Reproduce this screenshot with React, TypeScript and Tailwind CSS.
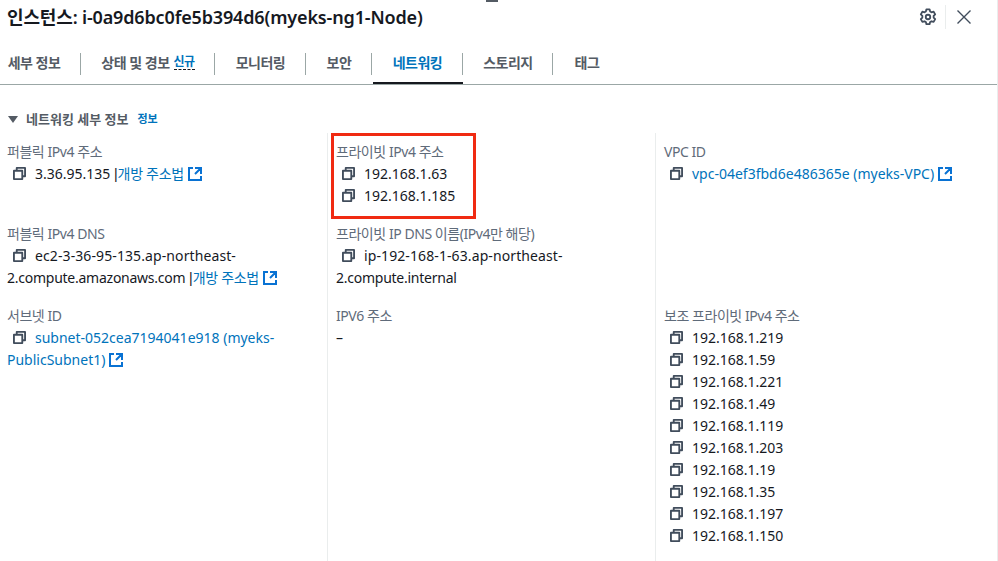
import type { ReactNode } from 'react';

const tabs = ['세부 정보', '상태 및 경보', '모니터링', '보안', '네트워킹', '스토리지', '태그'];
const tabWidths = ['w-[81px]', 'w-[134px]', 'w-[91px]', 'w-[66px]', 'w-[91px]', 'w-[90px]', 'w-[68px]'];
const secondaryIps = [
  '192.168.1.219',
  '192.168.1.59',
  '192.168.1.221',
  '192.168.1.49',
  '192.168.1.119',
  '192.168.1.203',
  '192.168.1.19',
  '192.168.1.35',
  '192.168.1.197',
  '192.168.1.150',
];

const CopyIcon = () => (
  <svg viewBox="1 1 14 14" fill="none" stroke="#414d5c" strokeWidth="2" className="inline-block w-[13px] h-[13px] ml-[6px] mr-[9px] align-[-1px]">
    <path d="M2 5h9v9H2z" strokeLinejoin="round" />
    <path d="M5 5V2h9v9h-3" strokeLinejoin="round" />
  </svg>
);

const ExternalIcon = () => (
  <svg viewBox="1 1 14 14" fill="none" stroke="#0972d3" strokeWidth="2" className="inline-block w-[14px] h-[14px] ml-[4px] align-[-2px]">
    <path d="M14 8V2H8M14 2 8 8M6 2H2v12h12v-4" />
  </svg>
);

// 개방 주소법 link, the bar before it is narrow in the original
const OpenAddress = () => (
  <>
    <span className="font-['Liberation_Sans',sans-serif]">|</span>
    <span className="text-[#0073bb] tracking-[-0.3px]">
      개방 주소법
      <ExternalIcon />
    </span>
  </>
);

const Field = ({ label, className, children }: { label: string; className: string; children: ReactNode }) => (
  <div className={className}>
    <div className="text-[#5f6b7a] tracking-[-0.45px]">{label}</div>
    {children}
  </div>
);

const IpList = ({ ips }: { ips: string[] }) => (
  <>
    {ips.map((ip) => (
      <div key={ip}>
        <CopyIcon />
        {ip}
      </div>
    ))}
  </>
);

const App = () => {
  return (
    <div className="relative w-[998px] h-[561px] overflow-hidden bg-white text-[14px] leading-[22px] text-[#16191f] font-['Noto_Sans','Noto_Sans_CJK_KR',sans-serif]">
      <div className="absolute left-[486px] top-0 w-[12px] h-[2px] bg-[#545b64]" />

      <div className="flex items-center justify-between h-[34px] pl-[7px] pr-[26px]">
        <h1 className="text-[18px] font-semibold leading-[34px] tracking-[-0.15px]">인스턴스: i-0a9d6bc0fe5b394d6(myeks-ng1-Node)</h1>
        <div className="flex items-center">
          <svg viewBox="0 0 16 16" fill="none" stroke="#414d5c" strokeWidth="1.6" className="w-[18px] h-[18px]">
            <path d="M6.6 1.2h2.8l.5 1.9 1.2.7 1.9-.5 1.4 2.4-1.4 1.4v1.4l1.4 1.4-1.4 2.4-1.9-.5-1.2.7-.5 1.9H6.6l-.5-1.9-1.2-.7-1.9.5-1.4-2.4 1.4-1.4V7.1L1.6 5.7 3 3.3l1.9.5 1.2-.7z" strokeLinejoin="round" />
            <circle cx="8" cy="8" r="2" />
          </svg>
          <div className="w-px h-[24px] bg-[#eaeded] ml-[8px] mr-[10px]" />
          <svg viewBox="0 0 16 16" fill="none" stroke="#414d5c" strokeWidth="1.4" className="w-[16px] h-[16px]">
            <path d="M1.5 1.5l13 13M14.5 1.5l-13 13" />
          </svg>
        </div>
      </div>

      <div className="flex h-[51px] pt-[17px] border-b border-[#9ba7a6] mr-[1px]">
        {tabs.map((tab, i) => (
          <div
            key={tab}
            className={`relative flex items-start justify-center h-[33px] pt-[1px] font-semibold tracking-[-0.5px] ${
              i === 4 ? 'text-[#0073bb]' : 'text-[#545b64]'
            } ${tabWidths[i]} ${i === 0 ? 'pr-[13px]' : ''}`}
          >
            {tab}
            {i === 1 && <span className="ml-[4px] mt-[2px] text-[12px] text-[#0073bb] border-b border-dashed border-[#16191f] leading-[15px]">신규</span>}
            {i < 6 && <span className="absolute right-0 top-[2px] w-px h-[22px] bg-[#9ba7a6]" />}
            {i === 4 && <span className="absolute left-[1px] right-0 bottom-0 h-[2px] bg-[#16191f]" />}
          </div>
        ))}
      </div>

      <div className="flex items-center h-[22px] mt-[23px] pl-[8px] font-semibold text-[#545b64] text-[13px]">
        <span className="w-0 h-0 border-x-[5px] border-x-transparent border-t-[7px] border-t-[#545b64] mr-[8px]" />
        네트워킹 세부 정보
        <span className="ml-[9px] text-[11px] text-[#0073bb]">정보</span>
      </div>

      <div className="grid grid-cols-[327px_328px_342px] mt-[3px] h-[428px]">
        <div className="pl-[7px] pr-[20px] pt-[8px]">
          <Field label="퍼블릭 IPv4 주소" className="h-[82px]">
            <div>
              <CopyIcon />
              3.36.95.135 <OpenAddress />
            </div>
          </Field>
          <Field label="퍼블릭 IPv4 DNS" className="h-[82px]">
            <div>
              <CopyIcon />
              <span className="tracking-[0.1px]">ec2-3-36-95-135.ap-northeast-</span>
              <span className="tracking-[-0.25px]">2.compute.amazonaws.com</span> <OpenAddress />
            </div>
          </Field>
          <Field label="서브넷 ID" className="h-[82px]">
            <div className="text-[#0073bb]">
              <CopyIcon />
              subnet-052cea7194041e918 (myeks-PublicSubnet1)
              <ExternalIcon />
            </div>
          </Field>
        </div>

        <div className="border-l border-[#eaeded] pl-[8px] pr-[70px] pt-[8px]">
          <Field label="프라이빗 IPv4 주소" className="h-[82px]">
            <IpList ips={['192.168.1.63', '192.168.1.185']} />
          </Field>
          <Field label="프라이빗 IP DNS 이름(IPv4만 해당)" className="h-[82px]">
            <div>
              <CopyIcon />
              <span className="tracking-[0.1px]">ip-192-168-1-63.ap-northeast-</span>
              <span className="tracking-[-0.25px]">2.compute.internal</span>
            </div>
          </Field>
          <Field label="IPV6 주소" className="h-[82px]">
            <div>–</div>
          </Field>
        </div>

        <div className="border-l border-[#eaeded] pl-[8px] pt-[8px]">
          <Field label="VPC ID" className="h-[164px]">
            <div className="text-[#0073bb]">
              <CopyIcon />
              vpc-04ef3fbd6e486365e (myeks-VPC)
              <ExternalIcon />
            </div>
          </Field>
          <Field label="보조 프라이빗 IPv4 주소" className="h-[242px]">
            <IpList ips={secondaryIps} />
          </Field>
        </div>
      </div>

      <div className="absolute left-[331px] top-[133px] w-[145px] h-[86px] border-[3px] border-[#f02a12]" />
      <div className="absolute right-0 top-0 w-px h-full bg-[#eaeded]" />
    </div>
  );
};

export default App;
